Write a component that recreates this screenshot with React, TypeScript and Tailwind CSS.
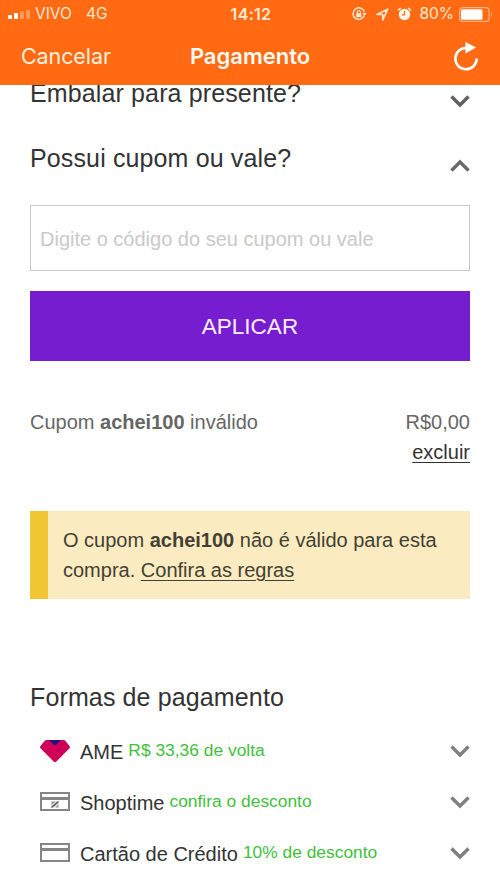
import type { ReactNode } from 'react';

interface PaymentMethod {
  name: string;
  benefit: string;
  icon: ReactNode;
}

function Chevron({ up = false, className = 'text-[#808080]' }: { up?: boolean; className?: string }) {
  return (
    <svg width="20" height="14" viewBox="0 0 20 14" className={`block shrink-0 ${className}`}>
      <path
        d={up ? 'M1.5 11.5 10 3l8.5 8.5' : 'M1.5 2.5 10 11l8.5-8.5'}
        fill="none"
        stroke="currentColor"
        strokeWidth="3.4"
      />
    </svg>
  );
}

function AmeIcon() {
  return (
    <svg width="30" height="24" viewBox="0 0 30 24" className="-mt-px">
      <path
        d="M6.5 1h17q1.2 0 2 .9l4 5q1 1.4-.2 2.6L16.4 22.4q-1.4 1.3-2.8 0L.7 9.5Q-.5 8.3.5 6.9l4-5q.8-.9 2-.9z"
        fill="#cf0059"
      />
      <path d="M9 1h12l-4.8 4.8q-1.2 1-2.4 0z" fill="#23107c" />
    </svg>
  );
}

function CardIcon({ branded = false }: { branded?: boolean }) {
  return (
    <svg width="30" height="20" viewBox="0 0 30 20" fill="none">
      <rect x="1" y="1" width="28" height="17" stroke="#858585" strokeWidth="2" />
      <path d="M1 6.5h28" stroke="#858585" strokeWidth="3" />
      {branded && (
        <>
          <rect x="11.5" y="9.5" width="7" height="6" fill="#d8d8d8" />
          <path d="M11.5 9.5h4l-4 3.5zM18.5 15.5h-3l3-3z" fill="#9a9a9a" />
          <path d="m11.5 15.5 7-6" stroke="#555" strokeWidth="1.5" />
        </>
      )}
    </svg>
  );
}

function StatusBar() {
  return (
    <div className="grid h-7 grid-cols-[1fr_auto_1fr] items-center pr-[6px] pl-2 text-[#ffe9cf]">
      <div className="flex items-center">
        <svg width="22" height="10" viewBox="0 0 22 10" className="mt-0.5">
          <rect x="0" y="5" width="4" height="4" rx=".8" fill="#fff" />
          <rect x="6" y="3" width="4" height="6" rx=".8" fill="#fff" />
          <rect x="12" y="1.5" width="4" height="7.5" rx=".8" fill="#ff9b58" />
          <rect x="18" y="0" width="4" height="9" rx=".8" fill="#ff9b58" />
        </svg>
        <span className="ml-[5px] text-[15.5px]">VIVO</span>
        <span className="ml-3.5 text-[15.5px]">4G</span>
      </div>
      <span className="text-[16px] font-semibold tracking-[0.3px]">14:12</span>
      <div className="flex items-center justify-end">
        <svg width="15" height="14" viewBox="0 0 15 14" fill="none" stroke="currentColor">
          <path d="M12.3 8.5A5.8 5.8 0 1 1 12.4 5" strokeWidth="1.5" />
          <path d="M10.3 6h4.4l-2.2 2.8z" fill="currentColor" stroke="none" />
          <rect x="4.2" y="6.2" width="5.2" height="4" fill="currentColor" stroke="none" />
          <path d="M5.3 6.5V5a1.5 1.5 0 0 1 3 0v1.5" strokeWidth="1.1" />
        </svg>
        <svg width="13" height="13" viewBox="0 0 13 13" className="ml-[9px]" fill="none" stroke="currentColor">
          <path d="M1 6.5 11.7 1.2 6.8 12V6.5z" strokeWidth="1.6" strokeLinejoin="round" />
        </svg>
        <svg width="15" height="14" viewBox="0 0 15 14" className="ml-2" fill="none">
          <circle cx="7.5" cy="7.5" r="5.7" fill="#fff6ea" />
          <path d="M7.5 4v3.8H5" stroke="#ff6a13" strokeWidth="1.2" />
          <path d="M1 3.5 3.8 1M14 3.5 11.2 1" stroke="#fff6ea" strokeWidth="1.6" />
        </svg>
        <span className="ml-[7px] text-[15.5px]">80%</span>
        <svg width="35" height="15" viewBox="0 0 35 15" className="ml-[5px]">
          <rect x=".6" y=".6" width="29.5" height="13.8" rx="3" fill="none" stroke="#ffb583" strokeWidth="1.2" />
          <rect x="2" y="2.3" width="21.5" height="10.4" rx="1.5" fill="#fff" />
          <path d="M32 5q2 2.5 0 5z" fill="#ffb583" />
        </svg>
      </div>
    </div>
  );
}

function NavBar() {
  return (
    <div className="grid h-[57px] grid-cols-[1fr_auto_1fr] items-center px-[21px]">
      <span className="text-[21.5px] tracking-[-0.1px] text-[#fff0df]">Cancelar</span>
      <h1 className="text-[22px] font-semibold text-[#fffaf4]">Pagamento</h1>
      <svg width="26" height="30" viewBox="0 0 26 30" className="justify-self-end">
        <path d="M14 5.9A10.7 10.7 0 1 0 23.7 16.5" fill="none" stroke="#fff" strokeWidth="2.6" />
        <path d="M12.5 0v11.5l10.5-6z" fill="#fff" />
      </svg>
    </div>
  );
}

const METHODS: PaymentMethod[] = [
  { name: 'AME', benefit: 'R$ 33,36 de volta', icon: <AmeIcon /> },
  { name: 'Shoptime', benefit: 'confira o desconto', icon: <CardIcon branded /> },
  { name: 'Cartão de Crédito', benefit: '10% de desconto', icon: <CardIcon /> },
];

export default function App() {
  return (
    <div className="flex h-[889px] w-[500px] flex-col overflow-hidden bg-white font-['Liberation_Sans',Arial,sans-serif] text-[20px] text-[#333]">
      <header className="h-[85px] shrink-0 bg-[#ff6a13] font-[Inter,sans-serif]">
        <StatusBar />
        <NavBar />
      </header>

      <main className="flex min-h-0 flex-1 flex-col overflow-hidden px-[30px]">
        {/* Scrolled partly under the header */}
        <div className="-mt-[9px] flex h-[34px] shrink-0 items-center justify-between">
          <h2 className="text-[25px] leading-[34px] tracking-[0.13px]">Embalar para presente?</h2>
          <Chevron className="mt-4 text-[#606060]" />
        </div>

        <div className="mt-[31px] flex h-[34px] shrink-0 items-center justify-between">
          <h2 className="text-[25px] leading-[34px] tracking-[0.13px]">Possui cupom ou vale?</h2>
          <Chevron up className="mt-4 text-[#696969]" />
        </div>

        <input
          className="mt-[30px] h-[66px] w-full shrink-0 border border-[#c8c8c8] px-[9px] pt-0.5 text-[20px] outline-none placeholder:text-[#c9c9c9]"
          placeholder="Digite o código do seu cupom ou vale"
        />
        <button className="mt-5 h-[70px] w-full shrink-0 bg-[#761ecf] pt-0.5 text-[22.5px] text-[#fbefff]">
          APLICAR
        </button>

        <div className="mt-[46px] flex shrink-0 justify-between leading-[30px] text-[#666]">
          <p>
            Cupom <b>achei100</b> inválido
          </p>
          <div className="flex flex-col items-end">
            <span>R$0,00</span>
            <a className="text-[#333] underline decoration-1 underline-offset-[3px]">excluir</a>
          </div>
        </div>

        <div className="mt-11 h-[88px] shrink-0 border-l-[18px] border-[#f0c634] bg-[#faecc0] pt-[15px] pl-[15px] leading-[29.5px] text-[#444034]">
          O cupom <b>achei100</b> não é válido para esta
          <br />
          compra. <a className="underline decoration-1 underline-offset-[3px]">Confira as regras</a>
        </div>

        <h2 className="mt-[81px] shrink-0 text-[25px] leading-[34px] tracking-[0.13px]">Formas de pagamento</h2>

        <ul className="mt-3 shrink-0">
          {METHODS.map((method) => (
            <li key={method.name} className="flex h-[50.8px] items-center pl-2.5">
              <span className="flex w-10 shrink-0">{method.icon}</span>
              <span className="mt-0.5">{method.name}</span>
              <span className="-mt-0.5 ml-[5px] text-[17.4px] text-[#41bf3b]">{method.benefit}</span>
              <Chevron className="ml-auto text-[#808080]" />
            </li>
          ))}
        </ul>
      </main>
    </div>
  );
}
